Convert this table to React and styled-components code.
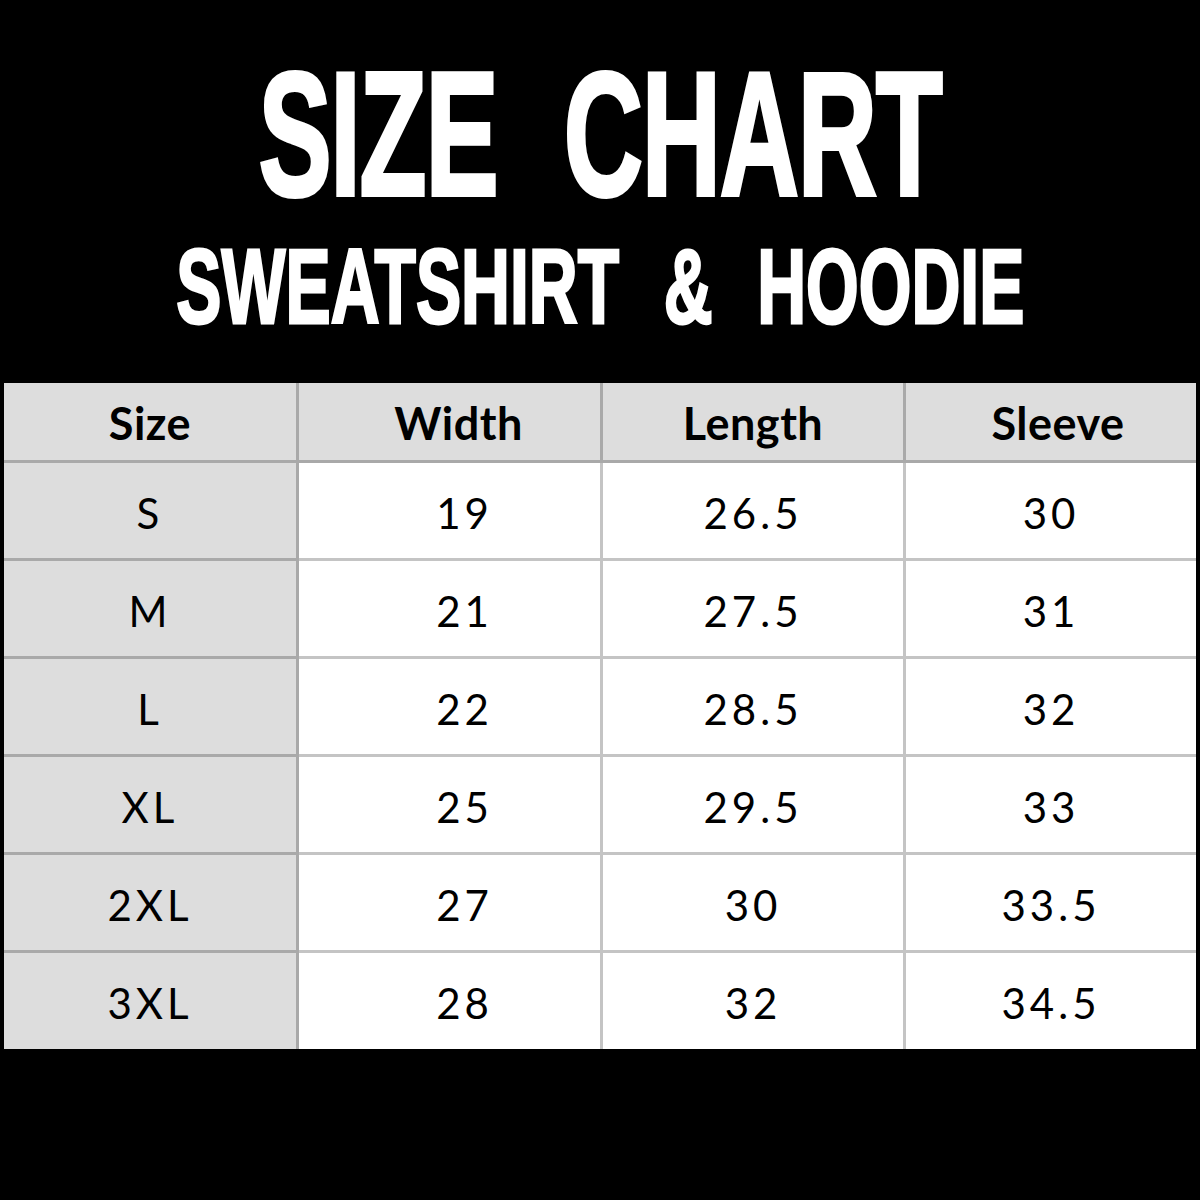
import React from 'react';
import styled, { createGlobalStyle } from 'styled-components';

const GlobalStyle = createGlobalStyle`
  html, body {
    margin: 0;
    padding: 0;
    background: #000;
  }
`;

const Page = styled.div`
  width: 1200px;
  height: 1200px;
  background: #000;
  overflow: hidden;
`;

const Header = styled.div`
  height: 383px;
  box-sizing: border-box;
  padding-top: 46px;
  display: flex;
  flex-direction: column;
  align-items: center;
`;

const Title = styled.h1`
  margin: 0;
  font-family: "Liberation Sans", Arial, sans-serif;
  font-weight: 700;
  font-size: ${p => p.size}px;
  line-height: 1;
  color: #fff;
  -webkit-text-stroke: ${p => p.stroke}px #fff;
  word-spacing: ${p => p.gap}px;
  letter-spacing: ${p => p.track}px;
  white-space: nowrap;
  transform: scaleX(${p => p.sx});
  margin-top: ${p => p.top || 0}px;
`;

const Table = styled.div`
  margin: 0 4px;
  display: grid;
  grid-template-columns: 295px 304px 303px 290px;
  grid-template-rows: 80px repeat(5, 98px) 96px;
`;

const Cell = styled.div`
  box-sizing: border-box;
  display: flex;
  align-items: center;
  justify-content: center;
  padding-left: ${p => p.shift || 0}px;
  background: ${p => (p.head || p.first ? '#dddddd' : '#ffffff')};
  border-right: ${p => (p.last ? 'none' : `3px solid ${p.head || p.first ? '#a9a9a9' : '#c4c4c4'}`)};
  border-bottom: ${p => (p.bottom ? 'none' : `3px solid ${p.head || p.first ? '#a9a9a9' : '#c4c4c4'}`)};
  color: #000;
`;

const HeadText = styled.span`
  font-family: Lato, "Noto Sans", sans-serif;
  font-weight: 700;
  font-size: 45px;
  letter-spacing: 0.5px;
  margin-top: 2px;
`;

const BodyText = styled.span`
  font-family: Lato, "Noto Sans", sans-serif;
  font-weight: 400;
  font-size: 42px;
  letter-spacing: 4px;
  margin-top: 4px;
`;

const columns = ['Size', 'Width', 'Length', 'Sleeve'];
const headShifts = [0, 18, 0, 14];
const bodyShifts = [0, 30, 0, 0];

const rows = [
  ['S', '19', '26.5', '30'],
  ['M', '21', '27.5', '31'],
  ['L', '22', '28.5', '32'],
  ['XL', '25', '29.5', '33'],
  ['2XL', '27', '30', '33.5'],
  ['3XL', '28', '32', '34.5'],
];

function App() {
  return (
    <Page>
      <GlobalStyle />
      <Header>
        <Title size={177} sx={0.62} gap={60} track={-2} stroke={4}>SIZE CHART</Title>
        <Title size={105} sx={0.645} gap={40} track={0} stroke={3} top={11}>SWEATSHIRT &amp; HOODIE</Title>
      </Header>
      <Table>
        {columns.map((c, i) => (
          <Cell key={c} head last={i === 3} shift={headShifts[i]}>
            <HeadText>{c}</HeadText>
          </Cell>
        ))}
        {rows.map((r, ri) =>
          r.map((v, ci) => (
            <Cell
              key={ri + '-' + ci}
              first={ci === 0}
              last={ci === 3}
              bottom={ri === rows.length - 1}
              shift={bodyShifts[ci]}
            >
              <BodyText>{v}</BodyText>
            </Cell>
          ))
        )}
      </Table>
    </Page>
  );
}

export default App;
